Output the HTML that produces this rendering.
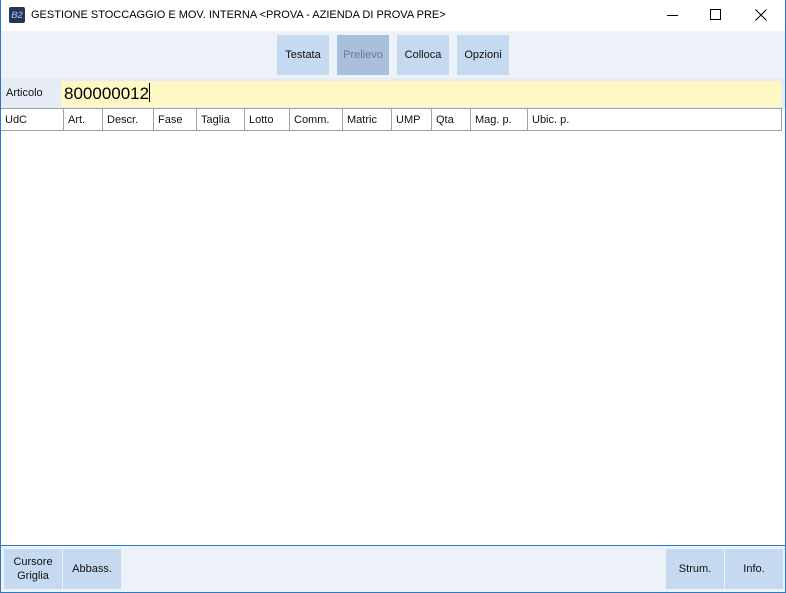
<!DOCTYPE html>
<html><head><style>
*{margin:0;padding:0;box-sizing:border-box}
body{width:786px;height:593px;overflow:hidden;background:#fff;font-family:"Liberation Sans",sans-serif;position:relative}
.win{position:absolute;left:0;top:0;width:786px;height:593px;border:1px solid #2b79c2;border-top:none}
.abs{position:absolute}
.btn{position:absolute;background:#c5d9f0;font-size:11px;color:#111;display:flex;align-items:center;justify-content:center;text-align:center;line-height:14px}
.hd{position:absolute;top:109px;height:22px;font-size:11px;line-height:22px;padding-left:4px;border-right:1px solid #a0a0a0;color:#111}
</style></head><body>
<div class="win"></div>
<div class="abs" style="left:9px;top:7px;width:16px;height:16px;background:#2b3550;border-radius:2px;color:#6fa8e8;font-size:9px;font-weight:bold;text-align:center;line-height:16px;font-style:italic">B2</div>
<div class="abs" style="left:31px;top:9px;font-size:11px;color:#000">GESTIONE STOCCAGGIO E MOV. INTERNA &lt;PROVA - AZIENDA DI PROVA PRE&gt;</div>
<div class="abs" style="left:667px;top:15px;width:11px;height:1px;background:#000"></div>
<div class="abs" style="left:710px;top:9px;width:11px;height:11px;border:1px solid #000"></div>
<svg class="abs" style="left:755px;top:9px" width="12" height="12"><path d="M0.5 0.5L11.5 11.5M11.5 0.5L0.5 11.5" stroke="#000" stroke-width="1"/></svg>
<div class="abs" style="left:1px;top:31px;width:784px;height:47px;background:#edf1f8"></div>
<div class="btn" style="left:277px;top:35px;width:52px;height:40px">Testata</div>
<div class="btn" style="left:337px;top:35px;width:52px;height:40px;background:#a9c0dc;color:#6a7a8c">Prelievo</div>
<div class="btn" style="left:397px;top:35px;width:52px;height:40px">Colloca</div>
<div class="btn" style="left:457px;top:35px;width:52px;height:40px">Opzioni</div>
<div class="abs" style="left:1px;top:78px;width:784px;height:31px;background:#e6ecf5"></div>
<div class="abs" style="left:6px;top:87px;font-size:11px;color:#111">Articolo</div>
<div class="abs" style="left:61px;top:81px;width:720px;height:26px;background:#fdf8c4;font-size:17px;line-height:26px;padding-left:3px;color:#000">800000012<span style="display:inline-block;width:1px;height:19px;background:#000;vertical-align:-3px"></span></div>
<div class="abs" style="left:1px;top:108px;width:781px;height:1px;background:#a0a0a0"></div>
<div class="abs" style="left:1px;top:130px;width:781px;height:1px;background:#a0a0a0"></div>
<div class="hd" style="left:1px;width:63px">UdC</div>
<div class="hd" style="left:64px;width:39px">Art.</div>
<div class="hd" style="left:103px;width:51px">Descr.</div>
<div class="hd" style="left:154px;width:43px">Fase</div>
<div class="hd" style="left:197px;width:48px">Taglia</div>
<div class="hd" style="left:245px;width:45px">Lotto</div>
<div class="hd" style="left:290px;width:53px">Comm.</div>
<div class="hd" style="left:343px;width:49px">Matric</div>
<div class="hd" style="left:392px;width:40px">UMP</div>
<div class="hd" style="left:432px;width:39px">Qta</div>
<div class="hd" style="left:471px;width:57px">Mag. p.</div>
<div class="hd" style="left:528px;width:254px">Ubic. p.</div>
<div class="abs" style="left:1px;top:545px;width:784px;height:1px;background:#2b79c2"></div>
<div class="abs" style="left:1px;top:546px;width:784px;height:46px;background:#edf1f8"></div>
<div class="btn" style="left:4px;top:549px;width:58px;height:40px">Cursore<br>Griglia</div>
<div class="btn" style="left:63px;top:549px;width:58px;height:40px">Abbass.</div>
<div class="btn" style="left:666px;top:549px;width:58px;height:40px">Strum.</div>
<div class="btn" style="left:725px;top:549px;width:58px;height:40px">Info.</div>
</body></html>
